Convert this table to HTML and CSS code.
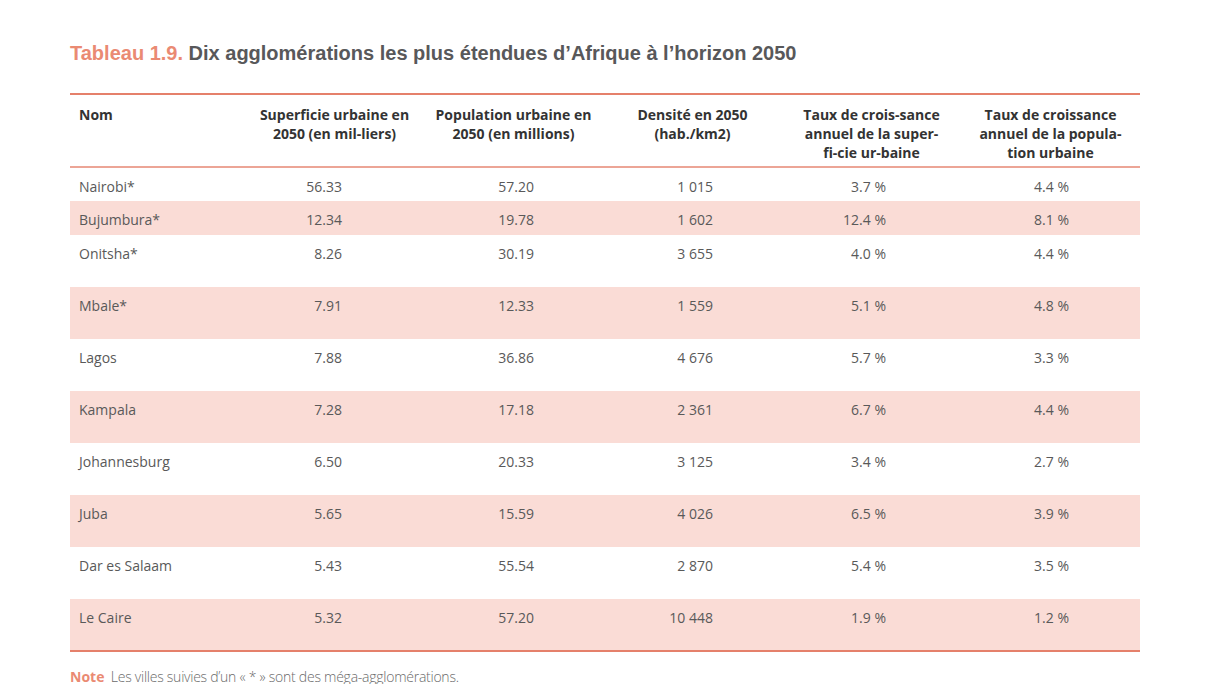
FILE: index.html
```html
<!DOCTYPE html>
<html lang="fr">
<head>
<meta charset="utf-8">
<title>Tableau 1.9</title>
<link rel="stylesheet" href="styles.css">
</head>
<body>
<main class="page">
  <h1 class="title"><span class="num">Tableau 1.9.</span> Dix agglomérations les plus étendues d’Afrique à l’horizon 2050</h1>
  <table class="data">
    <thead>
      <tr>
        <th class="c1">Nom</th>
        <th class="c2">Superficie urbaine en<br>2050 (en mil-liers)</th>
        <th class="c3">Population urbaine en<br>2050 (en millions)</th>
        <th class="c4">Densité en 2050<br>(hab./km2)</th>
        <th class="c5">Taux de crois-sance<br>annuel de la super-<br>fi-cie ur-baine</th>
        <th class="c6">Taux de croissance<br>annuel de la popula-<br>tion urbaine</th>
      </tr>
    </thead>
    <tbody>
      <tr class="short"><td>Nairobi*</td><td>56.33</td><td>57.20</td><td>1 015</td><td>3.7 %</td><td>4.4 %</td></tr>
      <tr class="short alt"><td>Bujumbura*</td><td>12.34</td><td>19.78</td><td>1 602</td><td>12.4 %</td><td>8.1 %</td></tr>
      <tr class="tall"><td>Onitsha*</td><td>8.26</td><td>30.19</td><td>3 655</td><td>4.0 %</td><td>4.4 %</td></tr>
      <tr class="tall alt"><td>Mbale*</td><td>7.91</td><td>12.33</td><td>1 559</td><td>5.1 %</td><td>4.8 %</td></tr>
      <tr class="tall"><td>Lagos</td><td>7.88</td><td>36.86</td><td>4 676</td><td>5.7 %</td><td>3.3 %</td></tr>
      <tr class="tall alt"><td>Kampala</td><td>7.28</td><td>17.18</td><td>2 361</td><td>6.7 %</td><td>4.4 %</td></tr>
      <tr class="tall"><td>Johannesburg</td><td>6.50</td><td>20.33</td><td>3 125</td><td>3.4 %</td><td>2.7 %</td></tr>
      <tr class="tall alt"><td>Juba</td><td>5.65</td><td>15.59</td><td>4 026</td><td>6.5 %</td><td>3.9 %</td></tr>
      <tr class="tall"><td>Dar es Salaam</td><td>5.43</td><td>55.54</td><td>2 870</td><td>5.4 %</td><td>3.5 %</td></tr>
      <tr class="tall alt last"><td>Le Caire</td><td>5.32</td><td>57.20</td><td>10 448</td><td>1.9 %</td><td>1.2 %</td></tr>
    </tbody>
  </table>
  <p class="note"><span class="note-label">Note</span> Les villes suivies d’un « * » sont des méga-agglomérations.</p>
</main>
</body>
</html>
```

FILE: styles.css
```css
html, body {
  margin: 0;
  padding: 0;
  background: #ffffff;
}

.page {
  padding: 40px 0 0 70px;
  width: 1070px;
}

.title {
  margin: 0 0 27px 0;
  font-family: "Liberation Sans", Arial, sans-serif;
  font-weight: bold;
  font-size: 20px;
  line-height: 26px;
  color: #58585a;
}

.title .num {
  color: #ea8a73;
}

.data {
  width: 1070px;
  border-collapse: collapse;
  table-layout: fixed;
  font-family: "Open Sans", "Noto Sans", sans-serif;
  font-size: 14px;
  color: #595959;
}

.data thead tr {
  border-top: 2px solid #e5806b;
  border-bottom: 2px solid #eca596;
}

.data th {
  vertical-align: top;
  font-weight: bold;
  font-size: 14px;
  line-height: 19px;
  color: #333333;
  padding: 10px 0 4px 0;
  height: 56px;
  text-align: center;
  font-stretch: 93%;
  white-space: nowrap;
}

.data th.c1 {
  text-align: left;
  padding-left: 9px;
  width: 166px;
}

.data td {
  vertical-align: top;
  padding: 9px 0 0 0;
  line-height: 20px;
  text-align: right;
  font-weight: 400;
}

.data td:nth-child(1) { text-align: left; padding-left: 9px; }
.data td:nth-child(2) { padding-right: 82px; }
.data td:nth-child(3) { padding-right: 69px; }
.data td:nth-child(4) { padding-right: 69px; }
.data td:nth-child(5) { padding-right: 75px; }
.data td:nth-child(6) { padding-right: 71px; }

.data tr.short { height: 34px; }
.data tr.tall { height: 52px; }
.data tr.alt { background: #fadcd6; }
.data tr.last { border-bottom: 2px solid #e5806b; }

.note {
  margin: 15px 0 0 0;
  font-family: "Open Sans", "Noto Sans", sans-serif;
  font-size: 14px;
  font-weight: 300;
  color: #6a6a6a;
  letter-spacing: -0.25px;
}

.note-label {
  color: #ea8a73;
  font-weight: bold;
  letter-spacing: 0;
  margin-right: 3px;
}
```
